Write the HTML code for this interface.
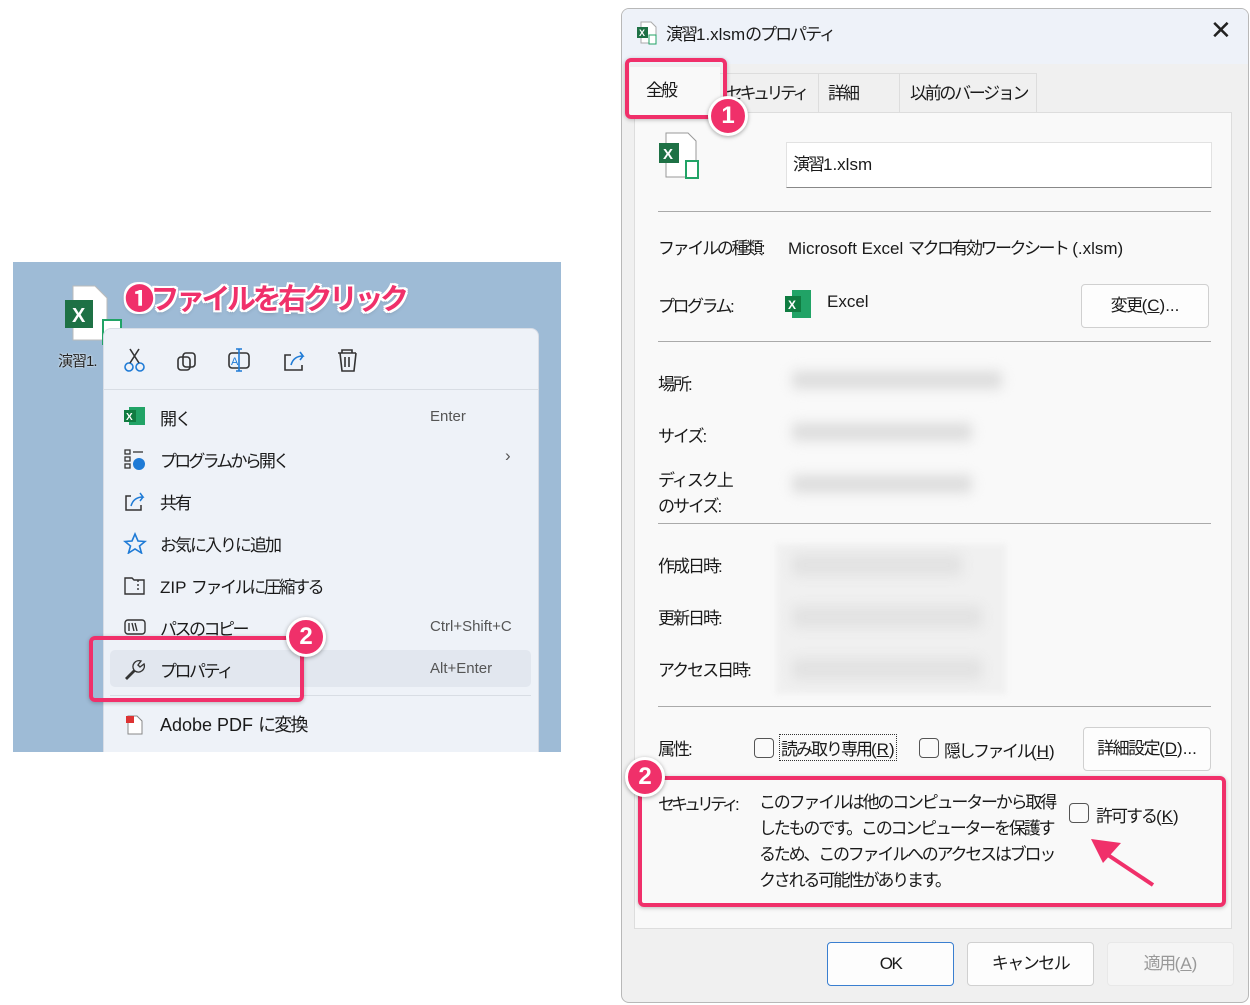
<!DOCTYPE html>
<html><head><meta charset="utf-8">
<style>
*{box-sizing:border-box;margin:0;padding:0}
body{width:1250px;height:1005px;background:#fff;position:relative;overflow:hidden;font-family:"Liberation Sans","Noto Sans CJK JP",sans-serif;color:#1a1a1a}
.a{position:absolute;white-space:nowrap}
.t{font-size:17px;letter-spacing:-2px}
.l{letter-spacing:0}
.pk{border:4px solid #f0306a;border-radius:6px;position:absolute;box-shadow:0 1px 4px rgba(0,0,0,.25)}
.num{position:absolute;width:40px;height:40px;border-radius:50%;background:#f0306a;border:3px solid #fff;color:#fff;font-weight:bold;font-size:24px;text-align:center;line-height:34px;box-shadow:0 1px 4px rgba(0,0,0,.35)}
.blur{position:absolute;background:#ddd;filter:blur(6px);border-radius:4px}
.cb{position:absolute;width:20px;height:20px;border:1px solid #555;border-radius:4px;background:#fafafa}
.btn{position:absolute;background:#fdfdfd;border:1px solid #d0d0d0;border-radius:4px;font-size:17px;text-align:center;letter-spacing:-1.5px}
</style></head><body>

<div class="a" style="left:13px;top:262px;width:548px;height:490px;background:#9ebbd6;overflow:hidden">
  <svg class="a" style="left:50px;top:22px" width="60" height="62" viewBox="0 0 60 62">
    <path d="M10 2h22l12 12v42H10z" fill="#fff" stroke="#bbb"/>
    <rect x="2" y="16" width="28" height="28" fill="#1e7145"/>
    <text x="9" y="38" font-size="20" font-weight="bold" fill="#fff" font-family="Liberation Sans">X</text>
    <rect x="40" y="36" width="18" height="24" fill="#fff" stroke="#21a366" stroke-width="2"/>
  </svg>
  <div class="a" style="left:45px;top:88px;font-size:15px;color:#222;text-shadow:0 0 2px #fff;letter-spacing:-1px">演習1.</div>
  <div class="a" style="left:112px;top:14px;font-size:29px;font-weight:bold;color:#f0306a;text-shadow:2px 0 #fff,-2px 0 #fff,0 2px #fff,0 -2px #fff,2px 2px #fff,-2px -2px #fff,2px -2px #fff,-2px 2px #fff,0 2px 5px rgba(0,0,0,.3);letter-spacing:-3.5px">❶ファイルを右クリック</div>
  <div class="a" style="left:90px;top:66px;width:436px;height:440px;background:#eef2f8;border-radius:8px;border:1px solid #d8dde6"></div>
  <div class="a" style="left:90px;top:127px;width:436px;height:1px;background:#d8dde4"></div>
  <svg class="a" style="left:110px;top:85px" width="250" height="26" viewBox="0 0 250 26" fill="none" stroke-width="1.6">
    <g stroke="#1f7bd6"><circle cx="6" cy="20" r="4"/><circle cx="17" cy="20" r="4"/></g>
    <path d="M7 16L16 2M16 16L7 2" stroke="#333"/>
    <rect x="60" y="6" width="12" height="14" rx="3" stroke="#333"/><rect x="55" y="10" width="12" height="13" rx="3" stroke="#333"/>
    <rect x="106" y="6" width="20" height="15" rx="3" stroke="#333"/><path d="M116 2v22M113 2h6M113 24h6" stroke="#1f7bd6"/><text x="108" y="18" font-size="11" fill="#1f7bd6" stroke="none">A</text>
    <path d="M168 8h-6v15h17v-5" stroke="#333"/><path d="M168 18c2-7 7-9 12-9l-3-4M180 9l-3 4" stroke="#1f7bd6"/>
    <path d="M215 6h18M219 6v-3h10v3M217 6l2 18h12l2-18M222 10v10M226 10v10" stroke="#333"/>
  </svg>
  <svg class="a" style="left:110px;top:143px" width="24" height="22"><rect x="6" y="2" width="16" height="18" fill="#21a366"/><rect x="1" y="5" width="12" height="12" fill="#107c41"/><text x="3" y="15" font-size="10" fill="#fff" font-weight="bold">X</text></svg>
  <div class="a t" style="left:147px;top:143px">開く</div><div class="a" style="left:417px;top:146px;font-size:15px;color:#555">Enter</div>
  <svg class="a" style="left:110px;top:186px" width="24" height="22" fill="none" stroke="#333" stroke-width="1.3"><rect x="2" y="2" width="5" height="4"/><rect x="2" y="9" width="5" height="4"/><rect x="2" y="16" width="5" height="4"/><path d="M10 4h10"/><circle cx="16" cy="16" r="6" fill="#1f7bd6" stroke="none"/></svg>
  <div class="a t" style="left:147px;top:185px;letter-spacing:-2.8px">プログラムから開く</div><div class="a" style="left:492px;top:184px;font-size:17px;color:#555">›</div>
  <svg class="a" style="left:110px;top:228px" width="24" height="22" fill="none" stroke-width="1.5"><path d="M8 6H3v14h15v-5" stroke="#333"/><path d="M8 16c2-7 7-9 12-9l-3-4M20 7l-3 4" stroke="#1f7bd6"/></svg>
  <div class="a t" style="left:147px;top:227px">共有</div>
  <svg class="a" style="left:110px;top:270px" width="24" height="22"><path d="M12 2l3 7 7 .5-5.5 4.5 2 7-6.5-4-6.5 4 2-7L2 9.5 9 9z" fill="none" stroke="#1f7bd6" stroke-width="1.6"/></svg>
  <div class="a t" style="left:147px;top:269px">お気に入りに追加</div>
  <svg class="a" style="left:110px;top:312px" width="24" height="22" fill="none" stroke="#333" stroke-width="1.4"><path d="M2 4h7l2 2h10v14H2z"/><path d="M15 6v12" stroke-dasharray="2 2"/></svg>
  <div class="a t" style="left:147px;top:311px;letter-spacing:-2.4px"><span class="l">ZIP </span>ファイルに圧縮する</div>
  <svg class="a" style="left:110px;top:355px" width="24" height="20" fill="none" stroke="#333" stroke-width="1.4"><rect x="2" y="3" width="20" height="14" rx="3"/><path d="M6 6v8M9 6l2 8M12 6l2 8"/></svg>
  <div class="a t" style="left:147px;top:353px;letter-spacing:-2.5px">パスのコピー</div><div class="a" style="left:417px;top:356px;font-size:15px;color:#555">Ctrl+Shift+C</div>
  <div class="a" style="left:97px;top:388px;width:421px;height:37px;background:#e2e7ef;border-radius:5px"></div>
  <svg class="a" style="left:110px;top:396px" width="24" height="22" fill="none" stroke="#333" stroke-width="1.4"><path d="M3 20l8-8a6 6 0 0 1 7-9l-3 4 2 2 4-3a6 6 0 0 1-9 7l-8 8z"/></svg>
  <div class="a t" style="left:147px;top:395px;letter-spacing:-2.5px">プロパティ</div><div class="a" style="left:417px;top:398px;font-size:15px;color:#555">Alt+Enter</div>
  <div class="a" style="left:97px;top:433px;width:421px;height:1px;background:#d8dde4"></div>
  <svg class="a" style="left:110px;top:451px" width="24" height="22"><path d="M5 3h9l5 5v13H5z" fill="#fff" stroke="#888"/><rect x="3" y="3" width="8" height="7" fill="#d33"/></svg>
  <div class="a" style="left:147px;top:449px;font-size:18px;letter-spacing:-1.8px"><span class="l">Adobe PDF </span>に変換</div>
  <div class="pk" style="left:76px;top:374px;width:215px;height:66px"></div>
  <div class="num" style="left:273px;top:355px">2</div>
</div>

<div class="a" style="left:621px;top:8px;width:628px;height:995px;background:#f0f0f0;border:1px solid #b8b8b8;border-radius:8px;overflow:hidden">
  <div class="a" style="left:0;top:0;width:628px;height:55px;background:#eef2f9"></div>
  <svg class="a" style="left:14px;top:12px" width="22" height="24"><path d="M5 1h10l5 5v16H5z" fill="#fff" stroke="#aaa"/><rect x="1" y="6" width="11" height="11" fill="#1e7145"/><text x="3" y="15" font-size="9" fill="#fff" font-weight="bold">X</text><rect x="13" y="14" width="7" height="9" fill="#fff" stroke="#21a366"/></svg>
  <div class="a t" style="left:44px;top:11px;letter-spacing:-2px">演習<span class="l">1.xlsm</span>のプロパティ</div>
  <div class="a" style="left:588px;top:6px;font-size:26px;font-weight:300;color:#222">✕</div>
  <div class="a" style="left:97px;top:64px;width:100px;height:40px;background:#f0f0f0;border:1px solid #ddd"></div>
  <div class="a" style="left:196px;top:64px;width:82px;height:40px;border:1px solid #ddd"></div>
  <div class="a" style="left:277px;top:64px;width:138px;height:40px;border:1px solid #ddd"></div>
  <div class="a t" style="left:104px;top:70px;letter-spacing:-3.5px">セキュリティ</div>
  <div class="a t" style="left:206px;top:70px">詳細</div>
  <div class="a t" style="left:288px;top:70px;letter-spacing:-2.3px">以前のバージョン</div>
  <div class="a" style="left:12px;top:103px;width:598px;height:817px;background:#f9f9f9;border:1px solid #ddd"></div>
  <div class="a" style="left:8px;top:58px;width:90px;height:50px;background:#f9f9f9"></div>
  <div class="a t" style="left:24px;top:67px">全般</div>
  <svg class="a" style="left:36px;top:122px" width="50" height="50"><path d="M8 2h22l8 8v36H8z" fill="#fff" stroke="#999"/><rect x="1" y="12" width="20" height="20" fill="#1e7145"/><text x="5" y="28" font-size="15" fill="#fff" font-weight="bold">X</text><rect x="28" y="30" width="12" height="17" fill="#fff" stroke="#21a366" stroke-width="2"/></svg>
  <div class="a" style="left:164px;top:133px;width:426px;height:46px;background:#fff;border:1px solid #e2e2e2;border-bottom:1px solid #888"></div>
  <div class="a t" style="left:171px;top:141px">演習<span class="l">1.xlsm</span></div>
  <div class="a" style="left:36px;top:202px;width:553px;height:1px;background:#aaa"></div>
  <div class="a t" style="left:36px;top:225px;letter-spacing:-2.3px">ファイルの種類<span class="l">:</span></div>
  <div class="a t" style="left:166px;top:225px;letter-spacing:-2.5px"><span class="l">Microsoft Excel </span>マクロ有効ワークシート<span class="l"> (.xlsm)</span></div>
  <div class="a t" style="left:36px;top:283px;letter-spacing:-2.5px">プログラム<span class="l">:</span></div>
  <svg class="a" style="left:162px;top:280px" width="28" height="30"><rect x="8" y="1" width="19" height="28" fill="#21a366"/><rect x="1" y="7" width="16" height="16" fill="#107c41"/><text x="4" y="20" font-size="12" fill="#fff" font-weight="bold">X</text></svg>
  <div class="a t l" style="left:205px;top:283px">Excel</div>
  <div class="btn" style="left:459px;top:275px;width:128px;height:44px;line-height:42px">変更<span class="l">(<u>C</u>)...</span></div>
  <div class="a" style="left:36px;top:332px;width:553px;height:1px;background:#aaa"></div>
  <div class="a t" style="left:36px;top:361px">場所<span class="l">:</span></div>
  <div class="a t" style="left:36px;top:413px">サイズ<span class="l">:</span></div>
  <div class="a t" style="left:36px;top:459px;line-height:26px">ディスク上<br>のサイズ<span class="l">:</span></div>
  <div class="blur" style="left:170px;top:362px;width:210px;height:18px"></div>
  <div class="blur" style="left:170px;top:414px;width:180px;height:18px"></div>
  <div class="blur" style="left:170px;top:466px;width:180px;height:18px"></div>
  <div class="a" style="left:36px;top:514px;width:553px;height:1px;background:#aaa"></div>
  <div class="a" style="left:154px;top:535px;width:230px;height:150px;background:#f0f0f0;filter:blur(3px)"></div>
  <div class="blur" style="left:170px;top:545px;width:170px;height:22px;background:#e2e2e2"></div>
  <div class="blur" style="left:170px;top:597px;width:190px;height:22px;background:#e2e2e2"></div>
  <div class="blur" style="left:170px;top:649px;width:190px;height:22px;background:#e2e2e2"></div>
  <div class="a t" style="left:36px;top:543px">作成日時<span class="l">:</span></div>
  <div class="a t" style="left:36px;top:595px">更新日時<span class="l">:</span></div>
  <div class="a t" style="left:36px;top:647px">アクセス日時<span class="l">:</span></div>
  <div class="a" style="left:36px;top:697px;width:553px;height:1px;background:#aaa"></div>
  <div class="a t" style="left:36px;top:726px">属性<span class="l">:</span></div>
  <div class="cb" style="left:132px;top:729px"></div>
  <div class="a t" style="left:157px;top:725px;border:1px dotted #333;padding:0 1px">読み取り専用<span class="l">(<u>R</u>)</span></div>
  <div class="cb" style="left:297px;top:729px"></div>
  <div class="a t" style="left:322px;top:728px;letter-spacing:-2.5px">隠しファイル<span class="l">(<u>H</u>)</span></div>
  <div class="btn" style="left:461px;top:718px;width:128px;height:44px;line-height:42px">詳細設定<span class="l">(<u>D</u>)...</span></div>
  <div class="a t" style="left:36px;top:781px;letter-spacing:-4px">セキュリティ<span class="l">:</span></div>
  <div class="a t" style="left:137px;top:781px;line-height:26px;letter-spacing:-2.2px">このファイルは他のコンピューターから取得<br>したものです。このコンピューターを保護す<br>るため、このファイルへのアクセスはブロッ<br>クされる可能性があります。</div>
  <div class="cb" style="left:447px;top:794px"></div>
  <div class="a t" style="left:474px;top:793px">許可する<span class="l">(<u>K</u>)</span></div>
  <svg class="a" style="left:465px;top:822px" width="70" height="60"><path d="M66 54L12 18" stroke="#f0306a" stroke-width="4"/><path d="M4 8l30 4-18 20z" fill="#f0306a"/></svg>
  <div class="btn l" style="left:205px;top:933px;width:127px;height:44px;line-height:42px;border:1px solid #3a7fd0">OK</div>
  <div class="btn" style="left:345px;top:933px;width:127px;height:44px;line-height:42px">キャンセル</div>
  <div class="btn" style="left:485px;top:933px;width:127px;height:44px;line-height:42px;background:#f5f5f5;border-color:#e8e8e8;color:#999">適用<span class="l">(<u>A</u>)</span></div>
</div>
<div class="pk" style="left:625px;top:58px;width:102px;height:61px"></div>
<div class="num" style="left:708px;top:96px">1</div>
<div class="pk" style="left:638px;top:776px;width:588px;height:131px"></div>
<div class="num" style="left:625px;top:757px">2</div>
</body></html>
